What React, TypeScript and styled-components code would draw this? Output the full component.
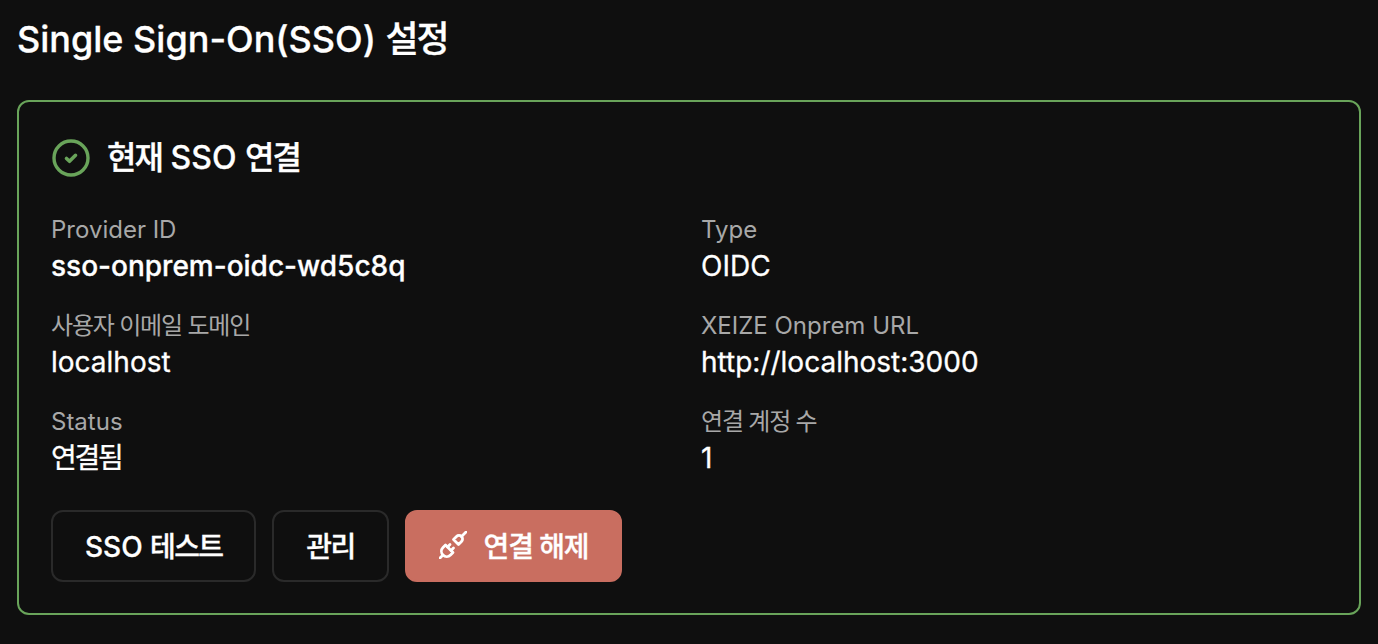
import React from 'react';
import styled, { createGlobalStyle } from 'styled-components';

const GlobalStyle = createGlobalStyle`
  html, body {
    margin: 0;
    background: #0f0f0f;
  }
  body {
    font-family: Inter, "Noto Sans CJK KR", sans-serif;
    color: #fff;
  }
`;

const Page = styled.div`
  width: 1378px;
  height: 644px;
  box-sizing: border-box;
  padding: 16px 17px 0 17px;
  overflow: hidden;
`;

const Title = styled.h1`
  margin: 0 0 38px;
  font-size: 36px;
  line-height: 46px;
  font-weight: 500;
  -webkit-text-stroke: 0.3px #fff;
`;

const Ko = styled.span<{ $spacing?: number }>`
  letter-spacing: ${(p) => p.$spacing ?? -0.06}em;
`;

const Card = styled.section`
  box-sizing: border-box;
  width: 1344px;
  height: 515px;
  border: 2px solid #69a45a;
  border-radius: 12px;
  padding: 32px;
`;

const CardHeader = styled.div`
  display: flex;
  align-items: center;
  gap: 16px;
  height: 48px;
  margin-bottom: 30px;
`;

const CardTitle = styled.h2`
  margin: 0;
  font-size: 32px;
  line-height: 40px;
  font-weight: 500;
  -webkit-text-stroke: 0.3px #fff;
`;

const Grid = styled.div`
  display: grid;
  grid-template-columns: 650px 1fr;
  row-gap: 24px;
`;

const Field = styled.div`
  display: flex;
  flex-direction: column;
`;

const Label = styled.span`
  font-size: 24px;
  line-height: 36px;
  color: #a8a8a8;
`;

const Value = styled.span<{ $strong?: boolean }>`
  font-size: 28px;
  line-height: 36px;
  font-weight: ${(p) => (p.$strong ? 500 : 400)};
  -webkit-text-stroke: 0.3px #fff;
`;

const Actions = styled.div`
  display: flex;
  gap: 16px;
  margin-top: 34px;
`;

const Button = styled.button<{ $danger?: boolean }>`
  display: inline-flex;
  align-items: center;
  gap: 17px;
  height: 72px;
  padding: 0 32px 3px;
  box-sizing: border-box;
  border-radius: 12px;
  border: 2px solid ${(p) => (p.$danger ? '#c96e60' : '#2a2a2a')};
  background: ${(p) => (p.$danger ? '#c96e60' : 'transparent')};
  color: #fff;
  font-family: inherit;
  font-size: 28px;
  font-weight: 500;
  -webkit-text-stroke: 0.3px #fff;
`;

const fields = [
  { label: 'Provider ID', value: 'sso-onprem-oidc-wd5c8q', strong: true },
  { label: 'Type', value: 'OIDC' },
  { label: <Ko $spacing={-0.05}>사용자 이메일 도메인</Ko>, value: 'localhost' },
  { label: 'XEIZE Onprem URL', value: 'http://localhost:3000' },
  { label: 'Status', value: <Ko $spacing={-0.08}>연결됨</Ko> },
  { label: <Ko $spacing={-0.05}>연결 계정 수</Ko>, value: '1' },
];

const App = () => (
  <Page>
    <GlobalStyle />
    <Title>
      Single Sign-On(SSO) <Ko>설정</Ko>
    </Title>
    <Card>
      <CardHeader>
        <svg width="40" height="40" viewBox="0 0 40 40" fill="none" stroke="#69a45a" strokeLinecap="round" strokeLinejoin="round">
          <circle cx="20" cy="20" r="17" strokeWidth="3.4" />
          <path d="M15.5 20.5l3 2.800 6-6" strokeWidth="3.600" />
        </svg>
        <CardTitle>
          <Ko>현재</Ko> SSO <Ko>연결</Ko>
        </CardTitle>
      </CardHeader>
      <Grid>
        {fields.map((f, i) => (
          <Field key={i}>
            <Label>{f.label}</Label>
            <Value $strong={f.strong}>{f.value}</Value>
          </Field>
        ))}
      </Grid>
      <Actions>
        <Button>
          <span>
            SSO <Ko>테스트</Ko>
          </span>
        </Button>
        <Button>
          <Ko>관리</Ko>
        </Button>
        <Button $danger>
          <svg width="28" height="28" viewBox="0 0 28 28" fill="none" stroke="#fff" strokeWidth="2.800" strokeLinecap="round" strokeLinejoin="round">
            <path d="M3.500 24.500L1 27" />
            <path d="M6.500 14l7.500 7.500-2.500 2.500a5.300 5.300 0 0 1-7.500-7.500z" />
            <path d="M8.500 16l2.500-2.500M12 19.500l2.500-2.500" />
            <path d="M14.500 8.500l5 5 3-3a3.500 3.500 0 0 0-5-5z" />
            <path d="M22.500 5.500L27 1" />
          </svg>
          <Ko $spacing={-0.04}>연결 해제</Ko>
        </Button>
      </Actions>
    </Card>
  </Page>
);

export default App;
